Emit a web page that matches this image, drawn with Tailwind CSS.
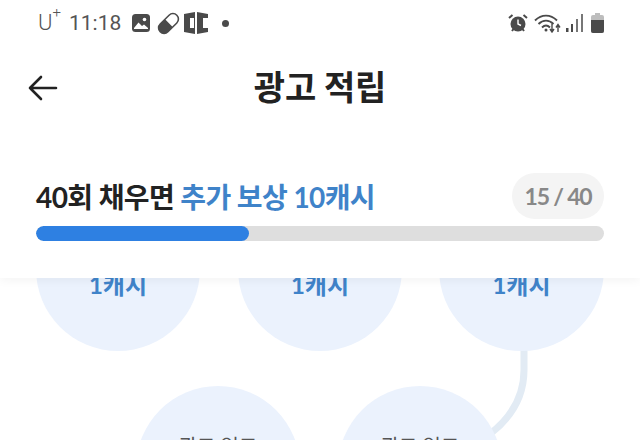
<!DOCTYPE html>
<html lang="ko">
<head>
  <meta charset="UTF-8" />
  <title>광고 적립</title>
  <script src="https://cdn.jsdelivr.net/npm/@tailwindcss/browser@4"></script>
</head>
<body class="w-[640px] h-[440px] overflow-hidden bg-white font-['Lato','Noto_Sans_CJK_KR',sans-serif]">
  <div class="relative h-[440px] overflow-hidden">
    <!-- Top card -->
    <div class="relative z-10 h-[278px] bg-white shadow-[0_2px_10px_rgba(0,0,0,0.05)]">
      <!-- Status bar -->
      <div class="h-[46px] pl-[38px] pr-[36px] flex items-center justify-between text-[#555]">
        <div class="flex items-center">
          <span class="text-[22px] font-['Roboto',sans-serif] font-light leading-none">U<sup class="text-[15px] align-[6px] leading-none">+</sup></span>
          <span class="ml-[8px] text-[21px] font-['Roboto',sans-serif] leading-none">11:18</span>
          <svg class="ml-[10px]" width="20" height="20" viewBox="0 0 20 20"><rect x="1" y="1" width="18" height="18" rx="3.5" fill="#4a4a4a"/><circle cx="13.5" cy="6.5" r="1.8" fill="#fff"/><path d="M3 15l4.5-5.5 3.5 3.5 2-1.5 4 3.5v1H3z" fill="#fff"/></svg>
          <svg class="ml-[6px]" width="23" height="23" viewBox="0 0 22 22"><g transform="rotate(-45 11 11)"><rect x="-1" y="5" width="24" height="12" rx="6" fill="#4a4a4a"/><path d="M11.5 6.500h5.500a4.500 4.500 0 0 1 0 9h-5.500z" fill="#fff"/></g></svg>
          <svg class="ml-[4px]" width="24" height="22" viewBox="0 0 24 22"><path d="M0 2l11-2v22L0 20zM6 6v10h4V6z" fill="#4a4a4a" fill-rule="evenodd"/><path d="M13 0l11 2v4h-5v10h5v4l-11 2z" fill="#4a4a4a"/></svg>
          <span class="ml-[14px] w-[7px] h-[7px] rounded-full bg-[#4a4a4a]"></span>
        </div>
        <div class="flex items-center">
          <svg width="20" height="20" viewBox="0 0 20 20"><circle cx="10" cy="11" r="7.500" fill="#4a4a4a"/><path d="M10 6.500V11l3 1.500" stroke="#fff" stroke-width="1.400" fill="none"/><path d="M1 5l3.500-3M19 5l-3.500-3M4 18l1.500-2M16 18l-1.500-2" stroke="#4a4a4a" stroke-width="2"/></svg>
          <svg class="ml-[6px]" width="28" height="20" viewBox="0 0 28 20"><g fill="none" stroke="#4a4a4a" stroke-width="1.900"><path d="M1 7.500c6.500-6.500 15.500-6.500 22 0"/><path d="M4.500 11c4.500-4.500 10.500-4.500 15 0"/><path d="M8 14.500c2.500-2.500 5.500-2.500 8 0"/></g><circle cx="12" cy="17" r="1.500" fill="#4a4a4a"/><path d="M18 11v7M16 16l2 3 2-3M24 19v-7M22 14.500l2-3 2 3" stroke="#4a4a4a" stroke-width="1.400" fill="none"/></svg>
          <svg class="ml-[4px]" width="17" height="18" viewBox="0 0 17 18"><rect x="0" y="14" width="2.500" height="4" fill="#4a4a4a"/><rect x="5" y="10" width="2" height="8" fill="#4a4a4a"/><rect x="10" y="5" width="2" height="13" fill="#777"/><rect x="15" y="0" width="2" height="18" fill="#777"/></svg>
          <svg class="ml-[8px]" width="13" height="20" viewBox="0 0 13 20"><path d="M4 0h5v2h2a2 2 0 0 1 2 2v14a2 2 0 0 1-2 2H2a2 2 0 0 1-2-2V4a2 2 0 0 1 2-2h2z" fill="#bdbdbd"/><path d="M0 7h13v11a2 2 0 0 1-2 2H2a2 2 0 0 1-2-2z" fill="#4a4a4a"/></svg>
        </div>
      </div>
      <!-- Header -->
      <div class="relative h-[82px] flex items-center justify-center">
        <svg class="absolute left-[28px] top-[29px]" width="30" height="26" viewBox="0 0 30 26" fill="none" stroke="#222" stroke-width="2.600" stroke-linecap="round" stroke-linejoin="round"><path d="M28 13H2M13 2L2 13l11 11"/></svg>
        <h1 class="text-[34px] font-bold text-[#222] tracking-[-0.2px] leading-none mt-[-1px]">광고 적립</h1>
      </div>
      <!-- Progress -->
      <div class="px-[36px] pt-[45px]">
        <div class="flex items-center justify-between">
          <p class="text-[28px] font-bold leading-none tracking-[-0.6px] text-[#222] pt-[2px]">40회 채우면 <span class="text-[#3f83c9]">추가 보상 10캐시</span></p>
          <span class="w-[92px] h-[46px] rounded-full bg-[#f4f4f4] flex items-center justify-center text-[23px] font-bold text-[#888] tracking-[-1.2px]">15 / 40</span>
        </div>
        <div class="mt-[7px] h-[15px] rounded-full bg-[#dedede] overflow-hidden">
          <div class="h-full rounded-full bg-[#2e80e2]" style="width: 37.500%"></div>
        </div>
      </div>
    </div>
    <!-- Mission circles -->
    <svg class="absolute left-0 top-0" width="640" height="440" fill="none"><path d="M524 340v30c0 30-16 50-34 64" stroke="#e2ebf4" stroke-width="7"/></svg>
    <div class="absolute left-[36px] top-[187px] w-[164px] h-[164px] rounded-full bg-[#ebf2fd] flex items-center justify-center text-[24px] font-bold text-[#3f83c9] pt-[32px]">1캐시</div>
    <div class="absolute left-[238px] top-[187px] w-[164px] h-[164px] rounded-full bg-[#ebf2fd] flex items-center justify-center text-[24px] font-bold text-[#3f83c9] pt-[32px]">1캐시</div>
    <div class="absolute left-[439px] top-[187px] w-[165px] h-[164px] rounded-full bg-[#ebf2fd] flex items-center justify-center text-[24px] font-bold text-[#3f83c9] pt-[32px]">1캐시</div>
    <div class="absolute left-[136px] top-[386px] w-[164px] h-[164px] rounded-full bg-[#ebf2fd] pt-[50px] text-center text-[20px] text-[#555] leading-none">광고 읽고</div>
    <div class="absolute left-[338px] top-[386px] w-[164px] h-[164px] rounded-full bg-[#ebf2fd] pt-[50px] text-center text-[20px] text-[#555] leading-none">광고 읽고</div>
  </div>
</body>
</html>
